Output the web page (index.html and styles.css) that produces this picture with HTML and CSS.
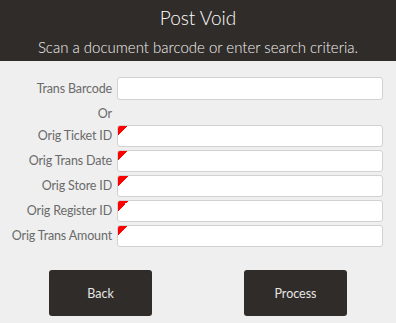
FILE: index.html
```html
<!DOCTYPE html>
<html>
<head>
<meta charset="utf-8">
<link rel="stylesheet" href="styles.css">
</head>
<body>
<header class="header">
  <div class="title">Post Void</div>
  <div class="subtitle">Scan a document barcode or enter search criteria.</div>
</header>
<main class="form">
  <div class="row">
    <label class="label">Trans Barcode</label>
    <input class="field field-tall" type="text">
  </div>
  <div class="row row-or">
    <span class="label">Or</span>
  </div>
  <div class="row">
    <label class="label">Orig Ticket ID</label>
    <input class="field required" type="text">
  </div>
  <div class="row">
    <label class="label">Orig Trans Date</label>
    <input class="field required" type="text">
  </div>
  <div class="row">
    <label class="label">Orig Store ID</label>
    <input class="field required" type="text">
  </div>
  <div class="row">
    <label class="label">Orig Register ID</label>
    <input class="field required" type="text">
  </div>
  <div class="row">
    <label class="label">Orig Trans Amount</label>
    <input class="field required" type="text">
  </div>
</main>
<footer class="actions">
  <button class="btn">Back</button>
  <button class="btn">Process</button>
</footer>
</body>
</html>
```
FILE: styles.css
```css
html, body {
  margin: 0;
  padding: 0;
}
body {
  width: 396px;
  height: 323px;
  background: #efefef;
  font-family: Lato, "Open Sans", sans-serif;
  overflow: hidden;
}
.header {
  height: 61px;
  background: #302c29;
  color: #ffffff;
  display: flex;
  flex-direction: column;
  align-items: center;
  box-sizing: border-box;
  padding-top: 5px;
}
.title {
  font-size: 19px;
  font-weight: 300;
  line-height: 26px;
}
.subtitle {
  font-size: 15px;
  font-weight: 300;
  line-height: 26px;
  margin-top: 3px;
  color: #f2f2f2;
}
.form {
  padding-top: 16px;
  display: flex;
  flex-direction: column;
  gap: 3px;
}
.row {
  display: grid;
  grid-template-columns: 112px 266px;
  column-gap: 5px;
  align-items: center;
}
.row-or {
  height: 19px;
  align-items: end;
}
.label {
  text-align: right;
  font-size: 12.5px;
  letter-spacing: -0.15px;
  color: #6a6a6a;
  line-height: 16px;
  white-space: nowrap;
}
.field {
  box-sizing: border-box;
  height: 22px;
  margin: 0;
  border: 1px solid #d2d2d2;
  border-radius: 3px;
  background-color: #ffffff;
  padding: 0 6px;
}
.field-tall {
  height: 23px;
}
.required {
  background-image: linear-gradient(135deg, #ff0000 50%, transparent 50%);
  background-size: 10px 10px;
  background-repeat: no-repeat;
  background-position: 0 0;
}
.actions {
  display: flex;
  justify-content: center;
  gap: 92px;
  margin-top: 23px;
}
.btn {
  width: 103px;
  height: 46px;
  border: none;
  border-radius: 3px;
  background: #302c29;
  color: #e6e6e6;
  font-family: Lato, "Open Sans", sans-serif;
  font-size: 12.5px;
  font-weight: 400;
  padding: 0;
}
```
